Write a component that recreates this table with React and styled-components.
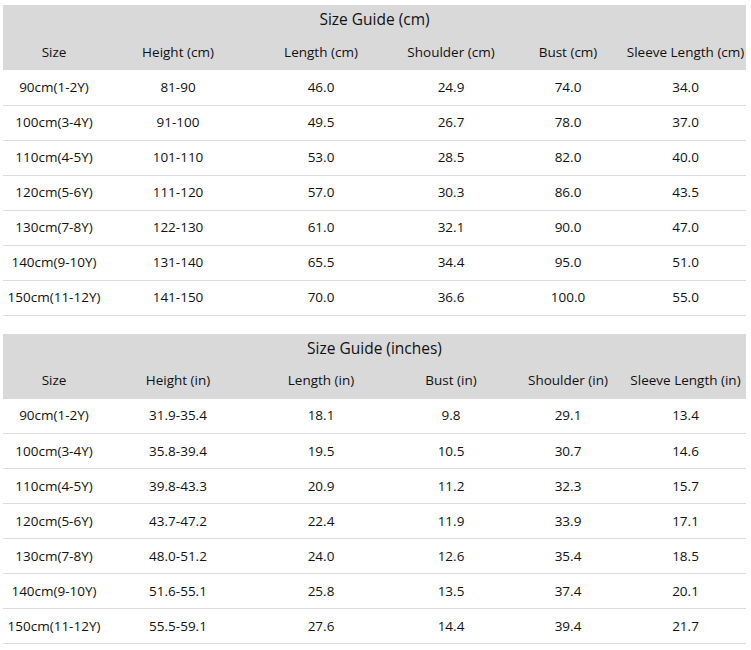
import React from "react";
import styled, { createGlobalStyle } from "styled-components";

const Global = createGlobalStyle`
  html, body { margin: 0; padding: 0; background: #fff; }
  body { font-family: "Open Sans", "Noto Sans", Arial, sans-serif; color: #111; }
`;

const Page = styled.div`
  padding: 5px 0 0 3px;
  display: flex;
  flex-direction: column;
  gap: 18px;
`;

const Table = styled.table`
  width: 743px;
  border-collapse: collapse;
  table-layout: fixed;
  font-size: 13.5px;
`;

const TitleCell = styled.th`
  background: #d9d9d9;
  height: 30px;
  padding: 0 0 2px;
  box-sizing: border-box;
  font-size: 15.5px;
  font-weight: 400;
  text-align: center;
  color: #111;
`;

const HeadCell = styled.th`
  background: #d9d9d9;
  height: 35px;
  box-sizing: border-box;
  padding: 0 0 2px;
  font-weight: 400;
  text-align: center;
  color: #111;
`;

const Row = styled.tr`
  border-bottom: 1px solid #dcdcdc;
`;

const Cell = styled.td`
  height: 35px;
  box-sizing: border-box;
  padding: 0 0 1px;
  text-align: center;
`;

const widths = [102, 146, 140, 120, 114, 121];

const cmData = {
  title: "Size Guide (cm)",
  head: ["Size", "Height (cm)", "Length (cm)", "Shoulder (cm)", "Bust (cm)", "Sleeve Length (cm)"],
  rows: [
    ["90cm(1-2Y)", "81-90", "46.0", "24.9", "74.0", "34.0"],
    ["100cm(3-4Y)", "91-100", "49.5", "26.7", "78.0", "37.0"],
    ["110cm(4-5Y)", "101-110", "53.0", "28.5", "82.0", "40.0"],
    ["120cm(5-6Y)", "111-120", "57.0", "30.3", "86.0", "43.5"],
    ["130cm(7-8Y)", "122-130", "61.0", "32.1", "90.0", "47.0"],
    ["140cm(9-10Y)", "131-140", "65.5", "34.4", "95.0", "51.0"],
    ["150cm(11-12Y)", "141-150", "70.0", "36.6", "100.0", "55.0"],
  ],
};

const inData = {
  title: "Size Guide (inches)",
  head: ["Size", "Height (in)", "Length (in)", "Bust (in)", "Shoulder (in)", "Sleeve Length (in)"],
  rows: [
    ["90cm(1-2Y)", "31.9-35.4", "18.1", "9.8", "29.1", "13.4"],
    ["100cm(3-4Y)", "35.8-39.4", "19.5", "10.5", "30.7", "14.6"],
    ["110cm(4-5Y)", "39.8-43.3", "20.9", "11.2", "32.3", "15.7"],
    ["120cm(5-6Y)", "43.7-47.2", "22.4", "11.9", "33.9", "17.1"],
    ["130cm(7-8Y)", "48.0-51.2", "24.0", "12.6", "35.4", "18.5"],
    ["140cm(9-10Y)", "51.6-55.1", "25.8", "13.5", "37.4", "20.1"],
    ["150cm(11-12Y)", "55.5-59.1", "27.6", "14.4", "39.4", "21.7"],
  ],
};

function SizeTable({ data }) {
  return (
    <Table>
      <colgroup>
        {widths.map((w, i) => (
          <col key={i} style={{ width: w }} />
        ))}
      </colgroup>
      <thead>
        <tr>
          <TitleCell colSpan={6}>{data.title}</TitleCell>
        </tr>
        <tr>
          {data.head.map((h) => (
            <HeadCell key={h}>{h}</HeadCell>
          ))}
        </tr>
      </thead>
      <tbody>
        {data.rows.map((r) => (
          <Row key={r[0]}>
            {r.map((c, i) => (
              <Cell key={i}>{c}</Cell>
            ))}
          </Row>
        ))}
      </tbody>
    </Table>
  );
}

export default function App() {
  return (
    <>
      <Global />
      <Page>
        <SizeTable data={cmData} />
        <SizeTable data={inData} />
      </Page>
    </>
  );
}
